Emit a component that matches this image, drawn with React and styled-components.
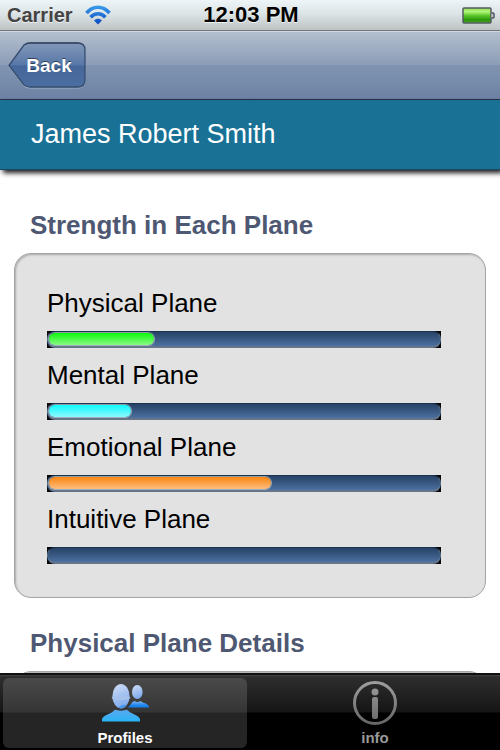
import React from "react";
import styled, { createGlobalStyle } from "styled-components";

const GlobalStyle = createGlobalStyle`
  * {
    box-sizing: border-box;
  }

  body {
    margin: 0;
    background: white;
    font-family: "Liberation Sans", Arial, Helvetica, sans-serif;
  }
`;

const Screen = styled.div`
  display: flex;
  flex-direction: column;
  height: 100vh;
  overflow: hidden;
`;

const StatusBar = styled.div`
  display: grid;
  grid-template-columns: 1fr auto 1fr;
  align-items: center;
  flex: none;
  height: 31px;
  padding: 0 5px 0 7px;
  border-bottom: 1px solid #70767c;
  background: linear-gradient(#eef5f8, #dde4e6 45%, #bec4c4);
  color: #444;
  font-size: 20px;
  line-height: 30px;
  text-shadow: 0 1px 0 rgba(255, 255, 255, 0.7);
`;

const Carrier = styled.div`
  display: flex;
  align-items: center;
  gap: 12px;
  font-weight: bold;
`;

const Clock = styled.time`
  color: black;
  font-size: 22px;
  font-weight: bold;
`;

const Battery = styled.svg`
  justify-self: end;
`;

const NavBar = styled.nav`
  display: flex;
  align-items: center;
  flex: none;
  height: 69px;
  padding: 0 8px;
  border-top: 1px solid #d2d9e2;
  border-bottom: 1px solid #283448;
  background: linear-gradient(#b3bfce, #8b9cb6 49%, #8094b1 50%, #6d82a4);
`;

const BackButton = styled.button`
  display: grid;
  align-items: center;
  width: 78px;
  height: 47px;
  padding: 0;
  border: 0;
  background: none;
  color: white;
  font: bold 19px/24px "Liberation Sans", Arial, sans-serif;
  text-shadow: 0 -1px 0 rgba(0, 0, 0, 0.5);

  > * {
    grid-area: 1 / 1;
  }

  span {
    padding-left: 4px;
  }
`;

const ProfileHeader = styled.header`
  flex: none;
  padding: 18px 31px 19px;
  border-bottom: 1px solid #174a5e;
  background: #197296;
  box-shadow: 3px 3px 5px rgba(0, 0, 0, 0.9);
  z-index: 1;
`;

const Name = styled.h1`
  margin: 0;
  color: white;
  font-size: 27px;
  font-weight: normal;
  line-height: 32px;
`;

const Content = styled.main`
  flex: 1;
  min-height: 0;
  padding: 39px 14px 0;
  overflow: hidden;
`;

const SectionTitle = styled.h2`
  margin: 0;
  padding: 0 16px;
  color: #4e5872;
  font-size: 26px;
  line-height: 32px;
`;

const Panel = styled.section`
  min-height: 100px;
  margin: 12px 0 29px;
  padding: 34px 44px 33px 32px;
  border: 1px solid #a5a5a5;
  border-radius: 17px;
  background: #e2e2e2;
  box-shadow: inset 1px 1px 2px rgba(0, 0, 0, 0.25);
`;

const Planes = styled.div`
  display: grid;
  gap: 12px;
`;

const Label = styled.div`
  margin-bottom: 13px;
  color: black;
  font-size: 26px;
  line-height: 30px;
`;

const Track = styled.div`
  height: 17px;
  background: #05080d;
`;

const Groove = styled.div`
  height: 17px;
  padding: 1px;
  border: 1px solid #1c3351;
  border-bottom: 2px solid #66758a;
  border-radius: 8px;
  border-left-color: #59708d;
  border-right-color: #59708d;
  background: linear-gradient(#264265, #4c70a0);
`;

const Fill = styled.div`
  height: 12px;
  border-radius: 6px;
  background: ${props => `linear-gradient(${props.$from}, ${props.$to})`};
  box-shadow: 0 0 0 1px rgba(225, 230, 215, 0.55);
`;

const TabBar = styled.nav`
  display: grid;
  grid-template-columns: 1fr 1fr;
  gap: 6px;
  flex: none;
  height: 77px;
  padding: 3px;
  border-top: 2px solid #111;
  background: linear-gradient(#434343, #2e2e2e 2px, #151515 37px, black 38px);
`;

const Tab = styled.button`
  display: flex;
  flex-direction: column;
  align-items: center;
  gap: 2px;
  padding: 2px 0 0;
  border: 0;
  border-radius: 6px;
  background: ${props =>
    props.$active
      ? "linear-gradient(#4a4a4a, #353535 34px, #252525 35px)"
      : "none"};
  color: ${props => (props.$active ? "white" : "#999")};
  font: bold 15px/20px "Liberation Sans", Arial, sans-serif;
`;

const planes = [
  { name: "Physical Plane", value: 27, from: "#0cfa0c", to: "#8bf984" },
  { name: "Mental Plane", value: 21, from: "#0cf9ff", to: "#8cf9ff" },
  { name: "Emotional Plane", value: 57, from: "#fa850f", to: "#ffbd80" },
  { name: "Intuitive Plane", value: 0 }
];

const WifiIcon = () => (
  <svg width="26" height="20" viewBox="0 0 26 20" aria-hidden="true">
    <defs>
      <linearGradient
        id="wifi"
        x1="0"
        y1="0"
        x2="0"
        y2="20"
        gradientUnits="userSpaceOnUse"
      >
        <stop offset="0" stopColor="#3ba0ec" />
        <stop offset="1" stopColor="#0b45be" />
      </linearGradient>
    </defs>
    <g fill="none" stroke="url(#wifi)" strokeWidth="3.6">
      <path d="M1.5 8C8 0.3 18 0.3 24.5 8" />
      <path d="M5.6 12.2C9.8 7.5 16.2 7.5 20.4 12.2" />
    </g>
    <path
      d="M9 15.5C11.3 13.2 14.7 13.2 17 15.5L13 19.5Z"
      fill="url(#wifi)"
    />
  </svg>
);

const BatteryIcon = () => (
  <Battery width="33" height="17" viewBox="0 0 33 17" aria-hidden="true">
    <defs>
      <linearGradient id="charge" x1="0" y1="0" x2="0" y2="1">
        <stop offset="0" stopColor="#8fe052" />
        <stop offset="0.25" stopColor="#b2f57c" />
        <stop offset="0.5" stopColor="#5cc72c" />
        <stop offset="0.8" stopColor="#2c950b" />
        <stop offset="1" stopColor="#49aa22" />
      </linearGradient>
    </defs>
    <rect
      x="1"
      y="1"
      width="28"
      height="15"
      rx="1"
      fill="url(#charge)"
      stroke="#565c62"
      strokeWidth="1.5"
    />
    <path
      d="M29.5 6H31Q32 6 32 7V10Q32 11 31 11H29.5"
      fill="#c5c9cf"
      stroke="#4b5158"
      strokeWidth="1.4"
    />
  </Battery>
);

const BackShape = () => (
  <svg width="78" height="47" viewBox="0 0 78 47" aria-hidden="true">
    <defs>
      <linearGradient id="back" x1="0" y1="0" x2="0" y2="1">
        <stop offset="0" stopColor="#8297b8" />
        <stop offset="0.5" stopColor="#5878a8" />
        <stop offset="0.52" stopColor="#456799" />
        <stop offset="1" stopColor="#4b6d9f" />
      </linearGradient>
    </defs>
    <path
      d="M1 24.5L16 4Q18.5 2 22 2H70Q77 2 77 9V39Q77 46 70 46H22Q18.5 46 16 44Z"
      fill="none"
      stroke="#b6c4d8"
      strokeOpacity="0.7"
    />
    <path
      d="M1 23.5L16 3Q18.5 1 22 1H70Q77 1 77 8V38Q77 45 70 45H22Q18.5 45 16 43Z"
      fill="url(#back)"
      stroke="#354c6f"
      strokeWidth="1.3"
    />
    <path d="M17 2.5Q19 1 22 1H70Q74 1 76 4" fill="none" stroke="#35445c" />
  </svg>
);

const ProfilesIcon = () => (
  <svg width="48" height="46" viewBox="0 0 48 46" aria-hidden="true">
    <defs>
      <linearGradient id="head" x1="0" y1="0" x2="0.3" y2="1">
        <stop offset="0" stopColor="#d3def5" />
        <stop offset="1" stopColor="#80aced" />
      </linearGradient>
      <linearGradient id="frontBody" x1="0" y1="0" x2="0" y2="1">
        <stop offset="0" stopColor="#5aa7ee" />
        <stop offset="1" stopColor="#28b4f5" />
      </linearGradient>
      <linearGradient id="rearBody" x1="0" y1="0" x2="0" y2="1">
        <stop offset="0" stopColor="#80b9f2" />
        <stop offset="0.6" stopColor="#2588ed" />
        <stop offset="1" stopColor="#147eea" />
      </linearGradient>
    </defs>
    <path
      d="M27 27.5Q29.5 25 31 22.5Q32.5 21 33.5 21Q36.5 23 39.5 21C42 23.5 48 23 48 27.5Z"
      fill="url(#rearBody)"
    />
    <ellipse cx="36.3" cy="12" rx="5.3" ry="7" fill="url(#head)" />
    <path
      d="M1 41.5V39C3 34.5 10 34 13 30.5Q14 29.500 15.500 30Q20 31.500 24.500 30Q26 29.500 27 30.500C30 34 37 34.500 39 39V41.500Z"
      fill="url(#frontBody)"
    />
    <ellipse cx="20" cy="16.200" rx="8.600" ry="12.200" fill="url(#head)" />
    <ellipse cx="20" cy="18" rx="9.400" ry="2" fill="#a7c1ed" />
    <path
      d="M17.500 27.800Q20 24.500 25.800 24.500Q23 28.500 20 28.400Z"
      fill="#4a99ed"
    />
  </svg>
);

const InfoIcon = () => (
  <svg width="48" height="46" viewBox="0 0 48 46" aria-hidden="true">
    <defs>
      <linearGradient
        id="info"
        x1="0"
        y1="0"
        x2="0"
        y2="46"
        gradientUnits="userSpaceOnUse"
      >
        <stop offset="0" stopColor="#a0a0a0" />
        <stop offset="1" stopColor="#646464" />
      </linearGradient>
    </defs>
    <circle
      cx="24"
      cy="23"
      r="20.5"
      fill="none"
      stroke="url(#info)"
      strokeWidth="3"
    />
    <circle cx="24" cy="12" r="3.5" fill="url(#info)" />
    <rect x="21" y="17" width="6" height="22" rx="2" fill="url(#info)" />
  </svg>
);

const PlaneStrength = ({ name, value, from, to }) => (
  <div>
    <Label>{name}</Label>
    <Track
      role="progressbar"
      aria-label={name}
      aria-valuenow={value}
      aria-valuemin={0}
      aria-valuemax={100}
    >
      <Groove>
        {value > 0 ? (
          <Fill $from={from} $to={to} style={{ width: `${value}%` }} />
        ) : null}
      </Groove>
    </Track>
  </div>
);

const App = () => (
  <>
    <GlobalStyle />
    <Screen>
      <StatusBar>
        <Carrier>
          Carrier
          <WifiIcon />
        </Carrier>
        <Clock>12:03 PM</Clock>
        <BatteryIcon />
      </StatusBar>
      <NavBar>
        <BackButton type="button">
          <BackShape />
          <span>Back</span>
        </BackButton>
      </NavBar>
      <ProfileHeader>
        <Name>James Robert Smith</Name>
      </ProfileHeader>
      <Content>
        <SectionTitle>Strength in Each Plane</SectionTitle>
        <Panel>
          <Planes>
            {planes.map(plane => (
              <PlaneStrength key={plane.name} {...plane} />
            ))}
          </Planes>
        </Panel>
        <SectionTitle>Physical Plane Details</SectionTitle>
        <Panel />
      </Content>
      <TabBar>
        <Tab type="button" $active>
          <ProfilesIcon />
          Profiles
        </Tab>
        <Tab type="button">
          <InfoIcon />
          info
        </Tab>
      </TabBar>
    </Screen>
  </>
);

export default App;
